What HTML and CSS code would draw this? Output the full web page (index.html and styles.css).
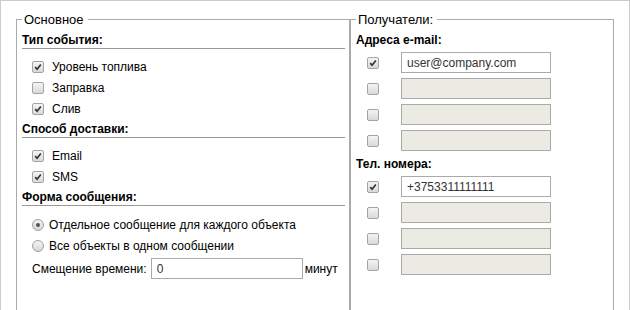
FILE: index.html
```html
<!DOCTYPE html>
<html lang="ru">
<head>
<meta charset="utf-8">
<title>Уведомление</title>
<link rel="stylesheet" href="styles.css">
</head>
<body>
<div class="panel">
  <fieldset class="fs fs-main">
    <legend>Основное</legend>
    <div class="sect">Тип события:</div>
    <div class="group">
      <label class="row"><span class="cb"><svg viewBox="0 0 12 12"><path d="M2.6 6.2 L4.9 8.6 L9.4 3"/></svg></span><span class="lbl">Уровень топлива</span></label>
      <label class="row"><span class="cb"></span><span class="lbl">Заправка</span></label>
      <label class="row"><span class="cb"><svg viewBox="0 0 12 12"><path d="M2.6 6.2 L4.9 8.6 L9.4 3"/></svg></span><span class="lbl">Слив</span></label>
    </div>
    <div class="sect">Способ доставки:</div>
    <div class="group">
      <label class="row"><span class="cb"><svg viewBox="0 0 12 12"><path d="M2.6 6.2 L4.9 8.6 L9.4 3"/></svg></span><span class="lbl">Email</span></label>
      <label class="row"><span class="cb"><svg viewBox="0 0 12 12"><path d="M2.6 6.2 L4.9 8.6 L9.4 3"/></svg></span><span class="lbl">SMS</span></label>
    </div>
    <div class="sect">Форма сообщения:</div>
    <div class="group group-radio">
      <label class="row"><span class="rb rb-on"></span><span class="lbl-r">Отдельное сообщение для каждого объекта</span></label>
      <label class="row"><span class="rb"></span><span class="lbl-r">Все объекты в одном сообщении</span></label>
    </div>
    <div class="offset">
      <span class="off-lbl">Смещение времени:</span>
      <input class="txt off-in" type="text" value="0">
      <span>минут</span>
    </div>
  </fieldset>
  <fieldset class="fs fs-rcpt">
    <legend>Получатели:</legend>
    <div class="sub">Адреса e-mail:</div>
    <div class="list">
      <span class="cb"><svg viewBox="0 0 12 12"><path d="M2.6 6.2 L4.9 8.6 L9.4 3"/></svg></span><input class="txt" type="text" value="user@company.com">
      <span class="cb"></span><input class="txt" type="text" disabled>
      <span class="cb"></span><input class="txt" type="text" disabled>
      <span class="cb"></span><input class="txt" type="text" disabled>
    </div>
    <div class="sub">Тел. номера:</div>
    <div class="list">
      <span class="cb"><svg viewBox="0 0 12 12"><path d="M2.6 6.2 L4.9 8.6 L9.4 3"/></svg></span><input class="txt" type="text" value="+3753311111111">
      <span class="cb"></span><input class="txt" type="text" disabled>
      <span class="cb"></span><input class="txt" type="text" disabled>
      <span class="cb"></span><input class="txt" type="text" disabled>
    </div>
  </fieldset>
</div>
</body>
</html>
```
FILE: styles.css
```css
html, body {
  margin: 0;
  padding: 0;
  background: #fff;
  overflow: hidden;
}
body {
  font: 12px "Liberation Sans", Arial, sans-serif;
  color: #000;
}
.panel {
  display: flex;
  align-items: stretch;
  border: 1px solid #cccccc;
  border-bottom: none;
  padding: 11px 15px 0;
  height: 340px;
  box-sizing: border-box;
}
.fs {
  margin: 0;
  border: 1px solid #aaaaaa;
  padding: 5px 4px 40px 5px;
  min-width: 0;
  box-sizing: border-box;
}
.fs-main { width: 334px; }
.fs-rcpt { width: 264px; }
legend {
  font-size: 13px;
  line-height: 15px;
  padding: 0 4px 0 2px;
}
.sect {
  font-weight: bold;
  line-height: 16px;
  border-bottom: 1px solid #999999;
}
.group {
  padding: 7px 0 2px 10px;
}
.group-radio {
  padding-top: 8px;
  padding-bottom: 0;
}
.row {
  display: flex;
  align-items: center;
  height: 21px;
}
.cb {
  width: 12px;
  height: 12px;
  box-sizing: border-box;
  border: 1px solid #a4a4a4;
  border-radius: 2px;
  background: linear-gradient(#f4f4f4, #d9d9d9);
  display: inline-flex;
  flex: none;
}
.cb svg {
  width: 10px;
  height: 10px;
}
.cb path {
  fill: none;
  stroke: #333;
  stroke-width: 2;
}
.lbl { margin-left: 8px; }
.lbl-r { margin-left: 5px; }
.rb {
  width: 12px;
  height: 12px;
  box-sizing: border-box;
  border: 1px solid #a0a0a0;
  border-radius: 50%;
  background: linear-gradient(#f4f4f4, #d6d6d6);
  display: inline-flex;
  align-items: center;
  justify-content: center;
  flex: none;
}
.rb-on::after {
  content: "";
  width: 4px;
  height: 4px;
  border-radius: 50%;
  background: #555;
}
.offset {
  display: flex;
  align-items: center;
  margin-top: 2px;
  padding-left: 10px;
}
.off-lbl { margin-right: 4px; }
.txt {
  font: 12px "Liberation Sans", Arial, sans-serif;
  color: #333;
  height: 21px;
  box-sizing: border-box;
  border: 1px solid #aaaaaa;
  padding: 0 5px;
  margin: 0;
  background: #fff;
  border-radius: 0;
  outline: none;
}
.txt:disabled {
  background: #ebebe4;
}
.off-in {
  width: 152px;
  margin-right: 2px;
}
.sub {
  font-weight: bold;
  line-height: 16px;
}
.list {
  display: grid;
  grid-template-columns: 45px 150px;
  row-gap: 5px;
  align-items: center;
  padding: 4px 0 5px;
}
.list .cb { margin-left: 11px; }
.list .txt { width: 150px; }
```
